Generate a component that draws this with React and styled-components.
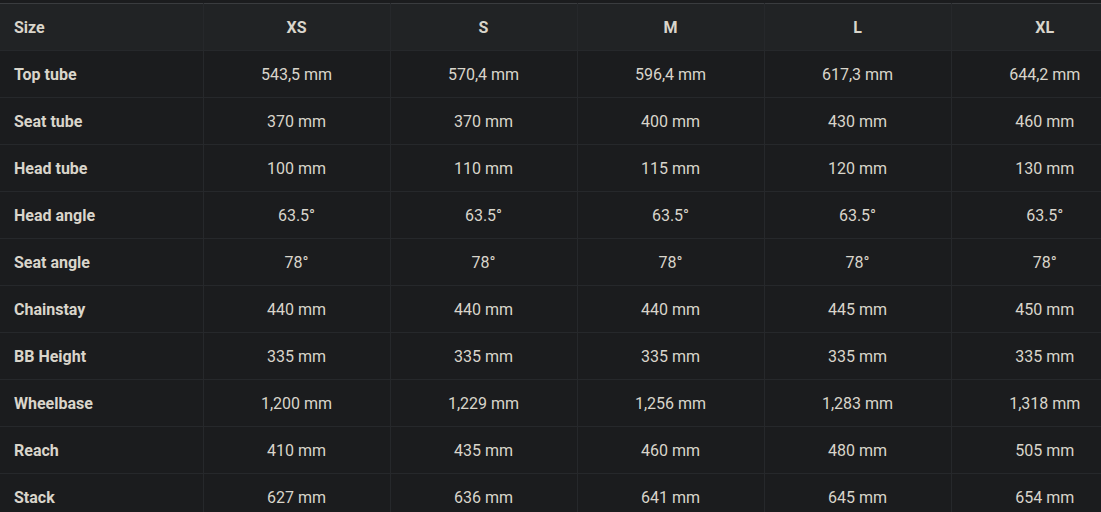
import React from 'react'
import styled, { createGlobalStyle } from 'styled-components'

const GlobalStyle = createGlobalStyle`
  html, body {
    margin: 0;
    padding: 0;
    overflow: hidden;
    background-color: #1b1c1e;
  }
  body {
    font-family: Roboto, "Liberation Sans", sans-serif;
  }
`

const Page = styled.div`
  padding-top: 3px;
  width: 1138px;
`

const Table = styled.table`
  width: 1138px;
  border-collapse: collapse;
  table-layout: fixed;
  border-top: 1px solid #3a3c3f;
  color: #d9d5cb;
  font-size: 16px;
`

const HeadRow = styled.tr`
  background-color: #212325;
  height: 47px;
`

const Row = styled.tr`
  height: 47px;
  border-top: 1px solid #26282b;
`

const Cell = styled.td`
  padding: 0 14px;
  text-align: ${props => props.label ? 'left' : 'center'};
  font-weight: ${props => props.label || props.head ? 700 : 400};
  border-left: ${props => props.label ? 'none' : '1px solid #26282b'};
  white-space: nowrap;
  vertical-align: middle;
`

const sizes = ['XS', 'S', 'M', 'L', 'XL']

const rows = [
  ['Top tube', '543,5 mm', '570,4 mm', '596,4 mm', '617,3 mm', '644,2 mm'],
  ['Seat tube', '370 mm', '370 mm', '400 mm', '430 mm', '460 mm'],
  ['Head tube', '100 mm', '110 mm', '115 mm', '120 mm', '130 mm'],
  ['Head angle', '63.5°', '63.5°', '63.5°', '63.5°', '63.5°'],
  ['Seat angle', '78°', '78°', '78°', '78°', '78°'],
  ['Chainstay', '440 mm', '440 mm', '440 mm', '445 mm', '450 mm'],
  ['BB Height', '335 mm', '335 mm', '335 mm', '335 mm', '335 mm'],
  ['Wheelbase', '1,200 mm', '1,229 mm', '1,256 mm', '1,283 mm', '1,318 mm'],
  ['Reach', '410 mm', '435 mm', '460 mm', '480 mm', '505 mm'],
  ['Stack', '627 mm', '636 mm', '641 mm', '645 mm', '654 mm']
]

export default function App () {
  return (
    <Page>
      <GlobalStyle />
      <Table>
        <colgroup>
          <col style={{ width: 203 }} />
          { sizes.map(s => <col key={ s } style={{ width: 187 }} />) }
        </colgroup>
        <thead>
          <HeadRow>
            <Cell as="th" label>Size</Cell>
            { sizes.map(s => <Cell as="th" head key={ s }>{ s }</Cell>) }
          </HeadRow>
        </thead>
        <tbody>
          { rows.map(([name, ...values]) => (
            <Row key={ name }>
              <Cell label>{ name }</Cell>
              { values.map((v, i) => <Cell key={ i }>{ v }</Cell>) }
            </Row>
          )) }
        </tbody>
      </Table>
    </Page>
  )
}
